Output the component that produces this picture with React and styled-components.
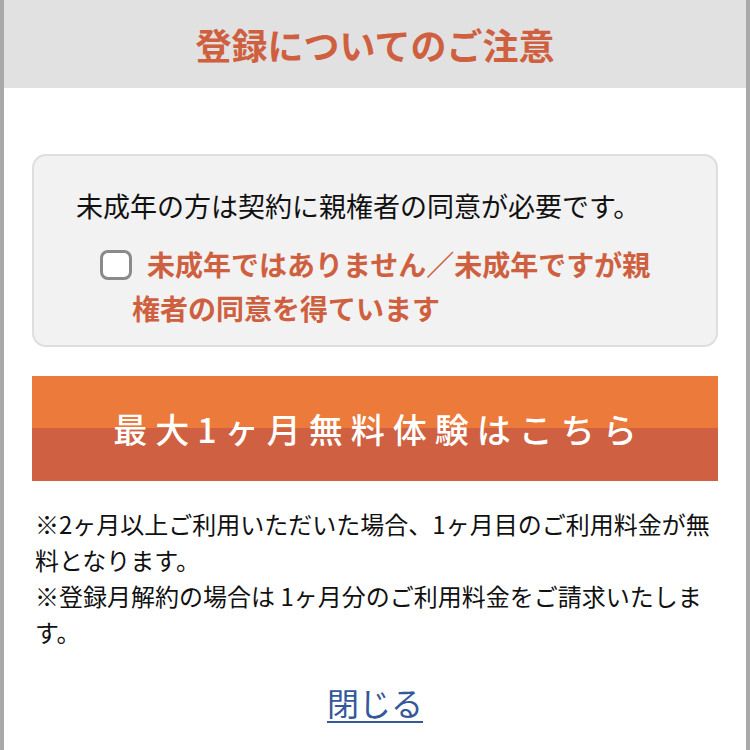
import styled, { createGlobalStyle } from "styled-components";

const GlobalStyle = createGlobalStyle`
  body {
    margin: 0;
    background: #ffffff;
    font-family: "Noto Sans CJK JP", "Noto Sans", sans-serif;
  }
`;

export default function App() {
  return (
    <>
      <GlobalStyle />
      <Page>
        <Header>
          <Title>登録についてのご注意</Title>
        </Header>
        <Content>
          <Card>
            <Lead>未成年の方は契約に親権者の同意が必要です。</Lead>
            <Agree>
              <Check type="checkbox" />
              未成年ではありません／未成年ですが親権者の同意を得ています
            </Agree>
          </Card>
          <TrialButton>最大1ヶ月無料体験はこちら</TrialButton>
          <Notes>
            <p>※2ヶ月以上ご利用いただいた場合、1ヶ月目のご利用料金が無料となります。</p>
            <p>※登録月解約の場合は 1ヶ月分のご利用料金をご請求いたします。</p>
          </Notes>
          <Close href="#">閉じる</Close>
        </Content>
      </Page>
    </>
  );
}

const Page = styled.div`
  min-height: 750px;
  border-left: 4px solid #a9a9a9;
  border-right: 4px solid #a9a9a9;
  background: #ffffff;
`;

const Header = styled.header`
  height: 88px;
  background: #e1e1e1;
  display: flex;
  justify-content: center;
  align-items: center;
`;

const Title = styled.h1`
  margin: 0;
  font-size: 36px;
  font-weight: 700;
  color: #cf603f;
  line-height: 1;
`;

const Content = styled.main`
  padding: 66px 28px 0;
  display: flex;
  flex-direction: column;
`;

const Card = styled.section`
  background: #f2f2f2;
  border: 2px solid #dedede;
  border-radius: 14px;
  padding: 30px 47px 15px 0;
`;

const Lead = styled.p`
  margin: 0;
  padding-left: 42px;
  font-size: 27px;
  line-height: 40px;
  color: #111111;
`;

const Agree = styled.label`
  display: block;
  margin-top: 16px;
  padding-left: 98px;
  text-indent: -32px;
  font-size: 28px;
  line-height: 44px;
  font-weight: 700;
  color: #cf603f;
`;

const Check = styled.input`
  appearance: none;
  box-sizing: border-box;
  width: 32px;
  height: 30px;
  margin: 0 15px 0 0;
  border: 3px solid #8a8a8a;
  border-radius: 8px;
  background: #ffffff;
  vertical-align: middle;
  position: relative;
  top: -3px;
`;

const TrialButton = styled.button`
  margin-top: 29px;
  height: 105px;
  border: none;
  padding: 0 0 0 8px;
  background: linear-gradient(#ec7a3a 50%, #cf6142 50%);
  color: #ffffff;
  font-family: "Noto Sans CJK JP", sans-serif;
  font-size: 34px;
  font-weight: 500;
  letter-spacing: 8px;
`;

const Notes = styled.div`
  margin-top: 25px;
  padding: 0 3px;
  font-size: 24px;
  line-height: 36px;
  color: #111111;

  p {
    margin: 0;
  }
`;

const Close = styled.a`
  align-self: center;
  margin-top: 32px;
  font-size: 32px;
  line-height: 40px;
  color: #35589a;
  text-decoration: underline;
  text-underline-offset: 5px;
  text-decoration-thickness: 2px;
`;
